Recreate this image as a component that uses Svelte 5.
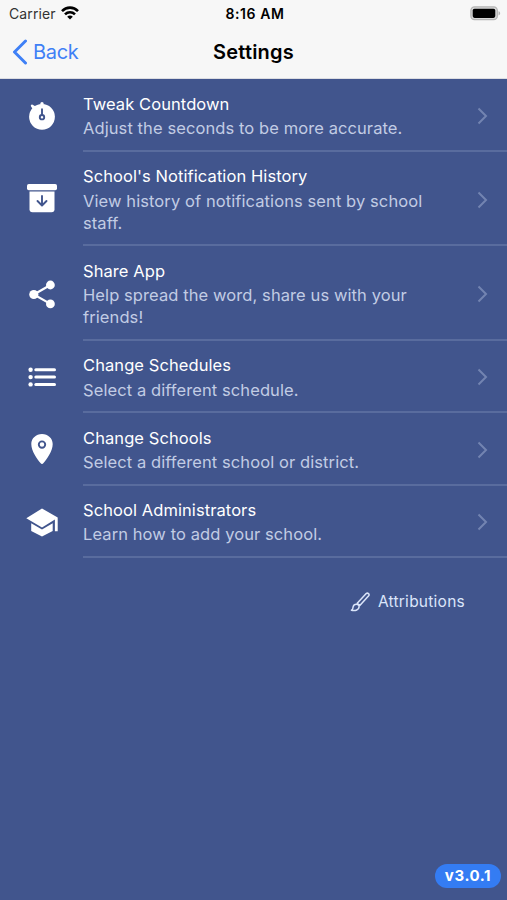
<script lang="ts">
  // Settings screen: status bar, navigation header and the list of options

  interface Item {
    icon: 'stopwatch' | 'archive' | 'share' | 'list' | 'pin' | 'school';
    title: string;
    text: string;
  }

  const items: Item[] = [
    { icon: 'stopwatch', title: 'Tweak Countdown', text: 'Adjust the seconds to be more accurate.' },
    {
      icon: 'archive',
      title: "School's Notification History",
      text: 'View history of notifications sent by school staff.',
    },
    { icon: 'share', title: 'Share App', text: 'Help spread the word, share us with your friends!' },
    { icon: 'list', title: 'Change Schedules', text: 'Select a different schedule.' },
    { icon: 'pin', title: 'Change Schools', text: 'Select a different school or district.' },
    { icon: 'school', title: 'School Administrators', text: 'Learn how to add your school.' },
  ];

  const version = 'v3.0.1';
</script>

<div class="screen">
  <header>
    <div class="status-bar">
      <div class="carrier">
        <span>Carrier</span>
        <svg viewBox="0 0 18 14" width="18" height="14" fill="none" stroke="#000" stroke-width="2.6">
          <path d="M1 5.1C5.5.5 12.5.5 17 5.1" />
          <path d="M4 8.3C6.8 5.5 11.2 5.5 14 8.3" />
          <path d="M9 13.5L6.2 10.7C7.8 9.2 10.2 9.2 11.8 10.7Z" fill="#000" stroke="none" />
        </svg>
      </div>
      <span class="time">8:16 AM</span>
      <div class="battery">
        <svg viewBox="0 0 31 15" width="31" height="15">
          <rect x="0.9" y="0.9" width="26.4" height="12.8" rx="3.6" fill="#d8d8d8" stroke="#b4b4b4" stroke-width="1.3" />
          <rect x="2.7" y="2.7" width="22.6" height="9.2" rx="1.8" fill="#000" />
          <path d="M28.5 5.2c2.2.6 2.2 3.6 0 4.2z" fill="#b4b4b4" />
        </svg>
      </div>
    </div>
    <nav>
      <button class="back">
        <svg viewBox="0 0 16 26" width="16" height="26" fill="none" stroke="currentColor" stroke-width="3" stroke-linecap="round" stroke-linejoin="round">
          <path d="M13.5 2L2.5 13l11 11" />
        </svg>
        <span>Back</span>
      </button>
      <h1>Settings</h1>
    </nav>
  </header>

  <main>
    <ul>
      {#each items as item (item.icon)}
        <li>
          <svg class="icon" viewBox="0 0 32 32" width="32" height="32" fill="currentColor">
            {#if item.icon === 'stopwatch'}
              <circle cx="16" cy="16.8" r="12.9" />
              <circle cx="16" cy="3.7" r="1.7" />
              <path d="M5.2 6.7a1.3 1.3 0 0 1 1.9-1.8l2.6 1.5-2.6 3z" />
              <path class="cut" d="M16 9.2v6" />
              <circle class="cut" cx="16" cy="17.2" r="2.2" />
            {:else if item.icon === 'archive'}
              <rect x="1" y="1" width="30" height="6.3" rx="1.8" />
              <path d="M3.5 8.6h25v17.6a3 3 0 0 1-3 3h-19a3 3 0 0 1-3-3z" />
              <path class="cut" d="M16 13v9.3M11.5 18l4.5 4.5 4.5-4.5" />
            {:else if item.icon === 'share'}
              <path d="M24.4 7L7.8 16.5l16.6 9.4" fill="none" stroke="currentColor" stroke-width="2.2" />
              <circle cx="24.4" cy="7" r="4.4" />
              <circle cx="7.8" cy="16.5" r="4.6" />
              <circle cx="24.4" cy="25.9" r="4.4" />
            {:else if item.icon === 'list'}
              {#each [8.8, 16.1, 23.4] as y}
                <circle cx="4.6" cy={y} r="2.2" />
                <rect x="8.3" y={y - 1.5} width="21.7" height="3" rx="1.5" />
              {/each}
            {:else if item.icon === 'pin'}
              <path d="M16 1C10 1 5.3 5.400 5.3 10.9 5.3 18.3 11.3 26 14.5 30a1.9 1.9 0 0 0 3 0C20.7 26 26.7 18.3 26.7 10.9 26.7 5.4 22 1 16 1z" />
              <circle class="cut" cx="16" cy="11.6" r="3.2" />
            {:else}
              <path d="M16 2.5L31.7 11.5v13.8h-2.800V13.600L16 21.6.3 12.2z" />
              <path d="M5.2 17.200L16 23.6l10.700-6.400v7.900L16 30.6 5.2 25.1z" />
            {/if}
          </svg>
          <div class="body">
            <div class="label">
              <h2>{item.title}</h2>
              <p>{item.text}</p>
            </div>
            <svg class="chevron" viewBox="0 0 11 18" width="11" height="18" fill="none" stroke="currentColor" stroke-width="2">
              <path d="M1.5 1.5L9 9l-7.5 7.5" />
            </svg>
          </div>
        </li>
      {/each}
    </ul>

    <button class="attributions">
      <svg viewBox="0 0 20 20" width="20" height="20" fill="none" stroke="currentColor" stroke-width="1.5" stroke-linejoin="round" stroke-linecap="round">
        <path d="M7.2 11.2L16.2 1.6c1.5-1.3 3.7.5 2.5 2.2L9.8 13.6z" />
        <path d="M6.300 12.200c1.700 0 2.900 1.200 2.800 2.700-.1 2.700-3.700 4.500-7.700 3.300 1.700-.8 1.300-1.600 1.700-3.300.4-1.700 1.600-2.700 3.200-2.700z" />
      </svg>
      <span>Attributions</span>
    </button>
  </main>

  <footer>
    <span class="version">{version}</span>
  </footer>
</div>

<style>
  :global(body) {
    margin: 0;
  }

  .screen {
    display: flex;
    flex-direction: column;
    height: 900px;
    background: #41558d;
    color: #fff;
    font-family: Inter, 'Liberation Sans', sans-serif;
    overflow: hidden;
  }

  header {
    box-sizing: border-box;
    height: 79px;
    background: #f7f7f7;
    border-bottom: 1px solid #dcdde2;
    color: #000;
    flex-shrink: 0;
  }

  .status-bar,
  nav {
    display: grid;
    grid-template-columns: 1fr auto 1fr;
    align-items: center;
  }

  .status-bar {
    height: 27px;
    padding: 0 6px 0 9px;
    font-size: 14px;
  }

  .carrier {
    display: flex;
    align-items: center;
    gap: 5px;
    color: #333;
    letter-spacing: 0.1px;
  }

  .carrier svg {
    margin-top: -2px;
  }

  .time {
    font-weight: 600;
    letter-spacing: 0.6px;
  }

  .battery {
    display: flex;
    justify-content: flex-end;
  }

  nav {
    height: 50px;
    padding: 0 12px;
  }

  button {
    display: flex;
    align-items: center;
    padding: 0;
    border: 0;
    background: none;
    font-family: inherit;
    cursor: pointer;
  }

  .back {
    gap: 5px;
    color: #3f80f6;
    font-size: 20px;
    letter-spacing: -0.3px;
  }

  h1 {
    margin: 0;
    font-size: 20px;
    font-weight: 600;
    letter-spacing: 0.2px;
  }

  ul {
    margin: 0;
    padding: 0.6px 0 0;
    list-style: none;
  }

  li {
    display: flex;
    align-items: center;
    padding-left: 26px;
  }

  .icon {
    flex-shrink: 0;
    margin-right: 25px;
  }

  .cut {
    fill: none;
    stroke: #41558d;
    stroke-width: 1.9;
    stroke-linecap: round;
    stroke-linejoin: round;
  }

  .body {
    display: flex;
    flex: 1;
    align-items: center;
    justify-content: space-between;
    padding: 13.4px 19px 10.5px 0;
    border-bottom: 2px solid #596c9e;
  }

  .label {
    width: 350px;
  }

  h2 {
    margin: 0 0 2.500px;
    font-size: 16.5px;
    font-weight: 400;
    line-height: 22px;
    letter-spacing: 0.08px;
  }

  p {
    margin: 0;
    color: #c2cce4;
    font-size: 16.5px;
    line-height: 22px;
    letter-spacing: 0.09px;
  }

  .chevron {
    color: #7384b1;
  }

  .attributions {
    gap: 8px;
    margin: 34px 42px 0 auto;
    color: #dbe5fa;
    font-size: 15.5px;
    letter-spacing: 0.25px;
  }

  footer {
    display: flex;
    justify-content: flex-end;
    margin-top: auto;
    padding: 0 6px 12px;
  }

  .version {
    width: 66px;
    border-radius: 12px;
    background: #347cf3;
    font-size: 15px;
    font-weight: 700;
    line-height: 24px;
    letter-spacing: 0.6px;
    text-align: center;
  }
</style>
